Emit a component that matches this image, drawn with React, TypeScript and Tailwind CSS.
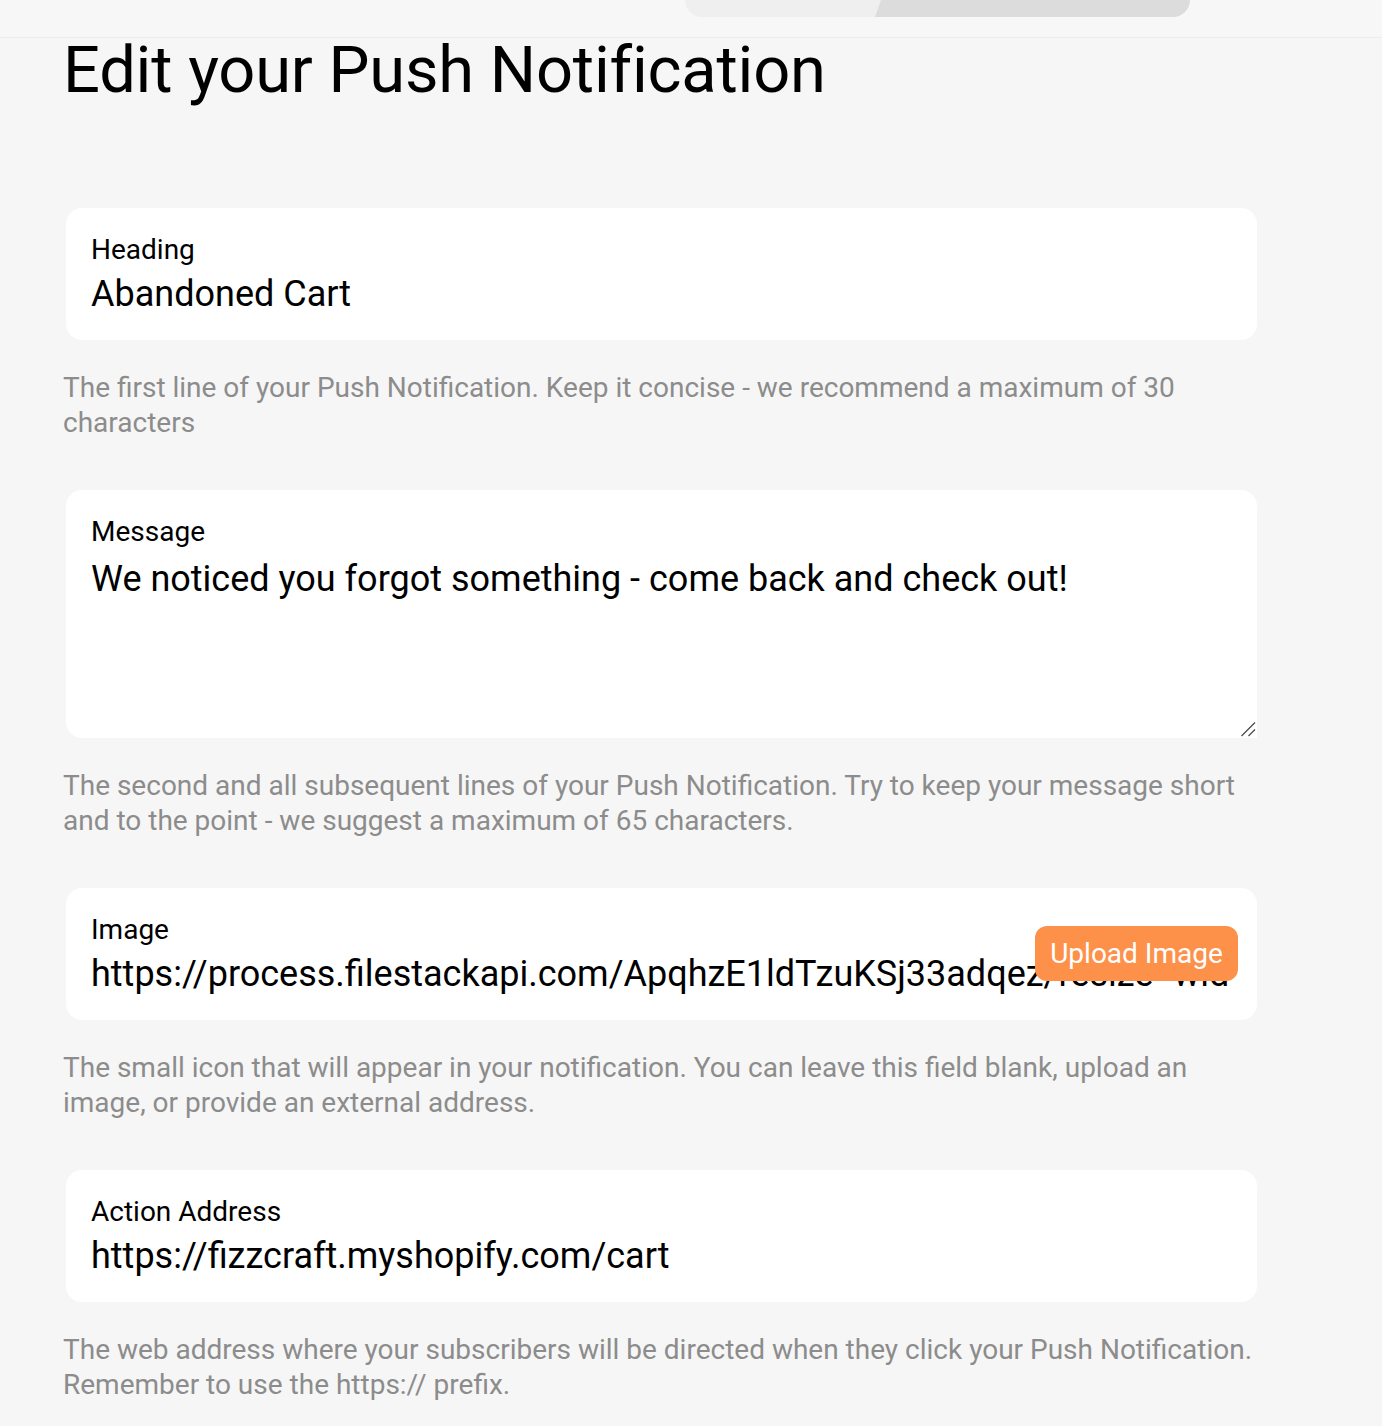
import { useState } from "react";

const font = "[font-family:Roboto,'Noto_Sans',sans-serif]";

const HelpText = ({ lines }: { lines: string[] }) => (
  <p className="mt-[30px] text-[28px] leading-[35px] text-[#8c8c8c]">
    {lines.map((line, i) => (
      <span key={i} className="block whitespace-nowrap">
        {line}
      </span>
    ))}
  </p>
);

const App = () => {
  const [heading, setHeading] = useState("Abandoned Cart");
  const [message, setMessage] = useState(
    "We noticed you forgot something - come back and check out!"
  );
  const [image, setImage] = useState(
    "https://process.filestackapi.com/ApqhzE1ldTzuKSj33adqez/resize=width:192/q8Zk2"
  );
  const [action, setAction] = useState("https://fizzcraft.myshopify.com/cart");

  return (
    <div className={`min-h-[1426px] bg-[#f6f6f6] text-black ${font}`}>
      {/* top bar with cut-off segmented toggle */}
      <div className="h-[38px] border-b border-[#ededed] bg-[#f7f7f7] pl-[685px]">
        <div className="flex h-[17px] w-[505px] overflow-hidden rounded-b-[26px]">
          <div className="w-[200px] bg-[#efefef]" />
          <div className="-ml-[10px] flex-1 bg-[#dcdcdc] [clip-path:polygon(6px_0,100%_0,100%_100%,0_100%)]" />
        </div>
      </div>

      <div className="pl-[63px] pb-[20px]">
        <h1 className="mt-[0px] text-[65px] leading-[65px] font-normal tracking-[-0.2px]">
          Edit your Push Notification
        </h1>

        {/* Heading */}
        <div className="mt-[105px] ml-[3px] w-[1191px] rounded-2xl bg-white px-[25px] pt-[25px] pb-[24px]">
          <label className="block text-[28px] leading-[34px]">Heading</label>
          <input
            value={heading}
            onChange={(e) => setHeading(e.target.value)}
            className="mt-[5px] block w-full bg-transparent text-[36px] leading-[44px] outline-none"
          />
        </div>
        <HelpText
          lines={[
            "The first line of your Push Notification. Keep it concise - we recommend a maximum of 30",
            "characters",
          ]}
        />

        {/* Message */}
        <div className="relative mt-[50px] ml-[3px] w-[1191px] rounded-2xl rounded-br-none bg-white">
          <label className="block px-[25px] pt-[25px] text-[28px] leading-[34px]">Message</label>
          <textarea
            value={message}
            onChange={(e) => setMessage(e.target.value)}
            className="mt-[8px] block h-[181px] w-full resize-none bg-transparent px-[25px] text-[36px] leading-[44px] outline-none"
          />
          <svg
            className="absolute right-[1px] bottom-[1px] h-[16px] w-[16px]"
            viewBox="0 0 16 16"
            fill="none"
            stroke="#4a4a4a"
            strokeWidth="1.3"
          >
            <path d="M1.5 15 L15 1.5" />
            <path d="M8.5 15 L15 8.5" />
          </svg>
        </div>
        <HelpText
          lines={[
            "The second and all subsequent lines of your Push Notification. Try to keep your message short",
            "and to the point - we suggest a maximum of 65 characters.",
          ]}
        />

        {/* Image */}
        <div className="relative mt-[50px] ml-[3px] w-[1191px] rounded-2xl bg-white px-[25px] pt-[25px] pb-[24px]">
          <label className="block text-[28px] leading-[34px]">Image</label>
          <input
            value={image}
            onChange={(e) => setImage(e.target.value)}
            className="mt-[5px] block w-full bg-transparent text-[36px] leading-[44px] outline-none"
          />
          <button className="absolute top-[38px] right-[19px] h-[55px] w-[203px] rounded-[12px] bg-[#fd914a] text-[28px] text-white">
            Upload Image
          </button>
        </div>
        <HelpText
          lines={[
            "The small icon that will appear in your notification. You can leave this field blank, upload an",
            "image, or provide an external address.",
          ]}
        />

        {/* Action Address */}
        <div className="mt-[50px] ml-[3px] w-[1191px] rounded-2xl bg-white px-[25px] pt-[25px] pb-[24px]">
          <label className="block text-[28px] leading-[34px]">Action Address</label>
          <input
            value={action}
            onChange={(e) => setAction(e.target.value)}
            className="mt-[5px] block w-full bg-transparent text-[36px] leading-[44px] outline-none"
          />
        </div>
        <HelpText
          lines={[
            "The web address where your subscribers will be directed when they click your Push Notification.",
            "Remember to use the https:// prefix.",
          ]}
        />
      </div>
    </div>
  );
};

export default App;
